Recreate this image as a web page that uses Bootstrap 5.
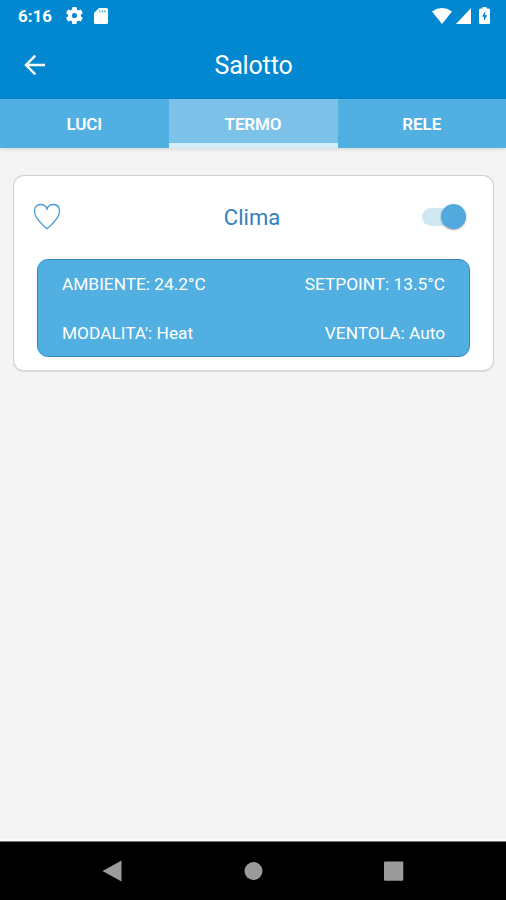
<!DOCTYPE html>
<html lang="it">
<head>
<meta charset="utf-8">
<meta name="viewport" content="width=device-width, initial-scale=1">
<title>Salotto</title>
<link href="https://cdn.jsdelivr.net/npm/bootstrap@5.3.0/dist/css/bootstrap.min.css" rel="stylesheet">
<style>
body{font-family:Roboto,"Liberation Sans",sans-serif;background:#f4f4f4;height:900px;overflow:hidden}
svg{display:block;flex:none}
.top-area{background:#0288d1;color:#fff}
.status-bar{height:31px;padding:0 16px 0 18px}
.clock{font-size:17px;font-weight:700;line-height:32px;width:48px}
.sd-icon{margin-left:11px}
.app-bar{display:grid;grid-template-columns:46px 1fr 46px;height:68px;padding:0 24px}
.back-icon{margin-top:-2px}
.app-title{font-size:25px;line-height:69px;letter-spacing:-.15px;padding-left:1px}
.tab-strip{height:49px;background:#52afe2;box-shadow:0 1px 4px rgba(0,0,0,.14)}
.tab-strip .nav-link{color:#fff;font-size:17px;font-weight:600;line-height:51px;height:49px;padding:0;border-radius:0;letter-spacing:-.1px}
.tab-strip .nav-link.active{background:#7cc2e8;border-bottom:5px solid #d4edfa;flex:0 0 169px}
.clima-card{margin:27px 12px 0 13px;height:197px;border:1.5px solid #cfcfcf;border-bottom:2px solid #d9d9d9;border-radius:11px;padding:0 23px}
.clima-head{display:grid;grid-template-columns:70px 1fr 70px;height:83px;margin:0 -4px}
.clima-head>.toggle,.clima-head>svg{margin-bottom:2px}
.clima-name{font-size:22px;color:#3181bf;line-height:83px;padding-right:3px}
.toggle{height:18px;width:44px;border-radius:9px;background:#cfe8f4;margin-right:8px}
.toggle-thumb{width:25px;height:25px;border-radius:50%;background:#52a9de;box-shadow:0 1px 2px rgba(0,0,0,.35)}
.readings{height:98px;border:1.5px solid #3189c6;border-radius:11px;background:#52afe2;color:#fff;padding:0 24px;font-size:17.3px}
.reading-row{height:49px;line-height:48px}
.nav-keys{height:61px;background:#000;border-top:2px solid #fcfcfc}
.nav-keys svg{border-top:1px solid #777}
</style>
<script src="https://cdn.jsdelivr.net/npm/bootstrap@5.3.0/dist/js/bootstrap.bundle.min.js"></script>
</head>
<body class="d-flex flex-column m-0">
<header class="top-area">
  <div class="status-bar d-flex align-items-center">
    <span class="clock">6:16</span>
    <svg width="17" height="17" viewBox="2 2 20 20" fill="#fff"><path d="M19.4 13a7.500 7.500 0 0 0 0-2l2.100-1.650a.5.5 0 0 0 .1-.65l-2-3.450a.5.5 0 0 0-.6-.2l-2.500 1a7.300 7.300 0 0 0-1.700-1l-.4-2.650a.5.5 0 0 0-.5-.4h-4a.5.5 0 0 0-.5.4L9 5.050a7.300 7.300 0 0 0-1.700 1l-2.500-1a.5.5 0 0 0-.6.2l-2 3.450a.5.5 0 0 0 .1.650L4.500 11a7.500 7.500 0 0 0 0 2l-2.200 1.650a.5.5 0 0 0-.1.650l2 3.450a.5.5 0 0 0 .6.2l2.500-1a7.300 7.300 0 0 0 1.700 1l.4 2.650a.5.5 0 0 0 .5.4h4a.5.5 0 0 0 .5-.4l.4-2.650a7.300 7.300 0 0 0 1.700-1l2.500 1a.5.5 0 0 0 .6-.2l2-3.450a.5.5 0 0 0-.1-.65zM12 15a3 3 0 1 1 0-6 3 3 0 0 1 0 6z"/></svg>
    <svg class="sd-icon" width="14" height="16" viewBox="0 0 14 16"><path fill="#fff" d="M5 0h7.500Q14 0 14 1.500v13q0 1.500-1.500 1.500h-11Q0 16 0 14.500V5z"/><path stroke="#0288d1" stroke-opacity=".65" stroke-width="1.200" d="M6 2v2.500M8.500 2v2.500M11 2v2.500"/></svg>
    <div class="d-flex align-items-center ms-auto">
      <svg width="20" height="16" viewBox="0 0 20 16"><path fill="#fff" d="M0 3.400Q10-3.200 20 3.400L10 16z"/></svg>
      <svg class="ms-1" width="15" height="16" viewBox="0 0 15 16"><path fill="#fff" d="M15 0v16H0z"/></svg>
      <svg class="ms-2" width="11" height="17" viewBox="0 0 11 17"><path fill="#fff" d="M3.500 0h4v1.500h2Q11 1.500 11 3v12.500q0 1.500-1.500 1.500h-8Q0 17 0 15.500V3q0-1.500 1.500-1.500h2z"/><path fill="#0288d1" d="M6.300 4 3 9.800h2v4l3.200-5.600h-2z"/></svg>
    </div>
  </div>
  <div class="app-bar align-items-center">
    <svg class="back-icon" width="22" height="22" viewBox="0 0 22 22" fill="none" stroke="#fff" stroke-width="2.400"><path d="M21 11H2.500M11.300 1.700 2 11l9.300 9.300"/></svg>
    <div class="app-title text-center">Salotto</div>
  </div>
</header>
<nav class="tab-strip nav nav-justified flex-nowrap">
  <a class="nav-link" href="#">LUCI</a>
  <a class="nav-link active" href="#">TERMO</a>
  <a class="nav-link" href="#">RELE</a>
</nav>
<main class="flex-grow-1">
  <section class="clima-card card">
    <div class="clima-head align-items-center">
      <svg width="28" height="27" viewBox="0 0 28 27" fill="none" stroke="#4c9bd3" stroke-width="1.300"><path d="M14 25.700C10 22 1.500 16 1.500 8.300 1.500 4 4 1.500 7.500 1.500 10.500 1.500 13 3 14 6 15 3 17.500 1.500 20.500 1.500 24 1.500 26.500 4 26.500 8.300 26.500 16 18 22 14 25.700z"/></svg>
      <div class="clima-name text-center">Clima</div>
      <div class="toggle d-flex align-items-center justify-content-end ms-auto"><span class="toggle-thumb"></span></div>
    </div>
    <div class="readings">
      <div class="reading-row d-flex justify-content-between"><span>AMBIENTE: 24.2°C</span><span>SETPOINT: 13.5°C</span></div>
      <div class="reading-row d-flex justify-content-between"><span>MODALITA': Heat</span><span>VENTOLA: Auto</span></div>
    </div>
  </section>
</main>
<footer class="nav-keys d-flex justify-content-center">
  <svg width="506" height="59" viewBox="0 842 506 58" fill="#9b9b9b"><path d="M102.500 871 121.500 860.500v21z"/><circle cx="253.500" cy="871" r="9"/><rect x="384" y="861.500" width="19.300" height="19.300" rx="1"/></svg>
</footer>
</body>
</html>
